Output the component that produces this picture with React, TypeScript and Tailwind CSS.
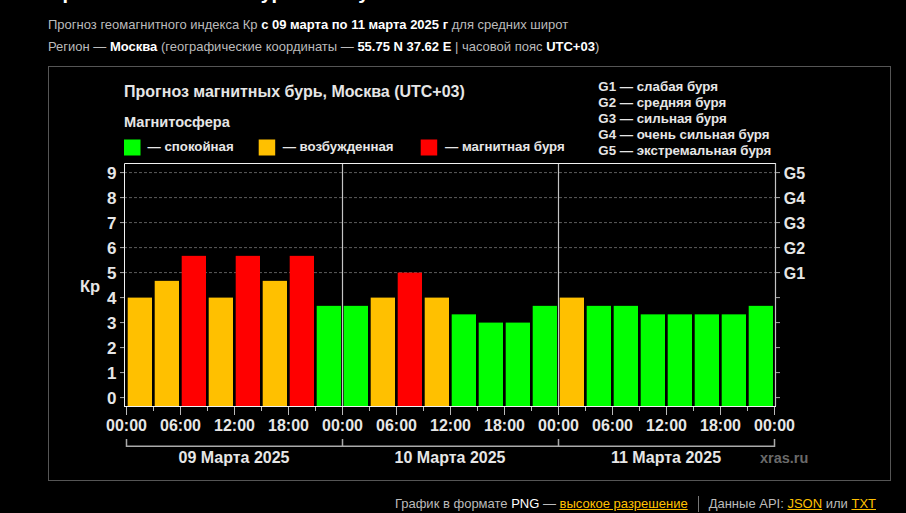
const AMBER = "#ffc000";
const RED = "#ff0000";
const GREEN = "#00ff00";

const kp = [
  4, 4.67, 5.67, 4, 5.67, 4.67, 5.67, 3.67,
  3.67, 4, 5, 4, 3.33, 3, 3, 3.67,
  4, 3.67, 3.67, 3.33, 3.33, 3.33, 3.33, 3.67,
];

const barColor = (v: number) => (v >= 5 ? RED : v >= 4 ? AMBER : GREEN);

const y0 = 330.6;
const unit = 25;
const yOf = (v: number) => y0 - v * unit;
const xOf = (i: number) => 77 + i * 27;

function Chart() {
  const labelProps = { fill: "#e6e6e6", fontWeight: 700, fontFamily: "'Liberation Sans', Arial, sans-serif" };
  return (
    <svg width="841" height="413" viewBox="0 0 841 413" className="block" {...labelProps}>
      <text x="75" y="29.5" fontSize="16">Прогноз магнитных бурь, Москва (UTC+03)</text>
      <text x="75" y="60" fontSize="14.6">Магнитосфера</text>

      <rect x="75" y="72.5" width="16.5" height="16" fill={GREEN} />
      <text x="98.5" y="84" fontSize="13.25">— спокойная</text>
      <rect x="209.7" y="72.5" width="16.5" height="16" fill={AMBER} />
      <text x="233.7" y="84" fontSize="13.25">— возбужденная</text>
      <rect x="371.7" y="72.5" width="16.5" height="16" fill={RED} />
      <text x="396" y="84" fontSize="13.25">— магнитная буря</text>

      <text x="549.3" y="24" fontSize="13.3">G1 — слабая буря</text>
      <text x="549.3" y="40" fontSize="13.3">G2 — средняя буря</text>
      <text x="549.3" y="56" fontSize="13.3">G3 — сильная буря</text>
      <text x="549.3" y="72" fontSize="13.3">G4 — очень сильная буря</text>
      <text x="549.3" y="88" fontSize="13.3">G5 — экстремальная буря</text>

      {/* grid */}
      {[5, 6, 7, 8, 9].map((v) => (
        <line key={v} x1="75" x2="726" y1={yOf(v)} y2={yOf(v)} stroke="#5c5c5c" strokeWidth="1" strokeDasharray="3 2" />
      ))}

      {/* bars */}
      {kp.map((v, i) => (
        <rect key={i} x={xOf(i) + 1.7} y={yOf(v)} width="24.3" height={339 - yOf(v)} fill={barColor(v)} />
      ))}

      {/* day separators and frame */}
      <line x1="293.5" x2="293.5" y1="96" y2="339" stroke="#c4c4c4" strokeWidth="1.2" />
      <line x1="509.5" x2="509.5" y1="96" y2="339" stroke="#c4c4c4" strokeWidth="1.2" />
      <line x1="726.5" x2="726.5" y1="96" y2="339" stroke="#c4c4c4" strokeWidth="1.2" />
      <path d="M75.5 339.5V96.5H726.5M75 339.5H727" fill="none" stroke="#f2f2f2" />

      {/* left ticks and Kp scale */}
      {[0, 1, 2, 3, 4, 5, 6, 7, 8, 9].map((v) => (
        <g key={v}>
          <line x1="71" x2="75" y1={yOf(v)} y2={yOf(v)} stroke="#aaa" />
          <line x1="727" x2="731" y1={yOf(v)} y2={yOf(v)} stroke="#aaa" />
          <text x="67.5" y={yOf(v) + 6.5} fontSize="17" textAnchor="end">{v}</text>
        </g>
      ))}
      <text x="31" y="224.7" fontSize="16.5">Кр</text>

      {/* G scale */}
      {[5, 6, 7, 8, 9].map((v) => (
        <text key={v} x="734.7" y={yOf(v) + 6.3} fontSize="16">G{v - 4}</text>
      ))}

      {/* time axis */}
      {Array.from({ length: 25 }, (_, i) => (
        <line key={i} x1={xOf(i) + 0.5} x2={xOf(i) + 0.5} y1="340" y2={i % 2 === 0 ? 348 : 344} stroke="#bbb" />
      ))}
      {Array.from({ length: 13 }, (_, i) => {
        const h = ["00:00", "06:00", "12:00", "18:00"][i % 4];
        return (
          <text key={i} x={xOf(i * 2) + 0.5} y="363.5" fontSize="16" textAnchor="middle">{h}</text>
        );
      })}

      {/* day brackets */}
      <path d="M77.5 372V379.2H725.5V372M293.5 372V379.2M509.5 372V379.2" fill="none" stroke="#aaa" strokeWidth="1.5" />
      <text x="185" y="396" fontSize="16" textAnchor="middle">09 Марта 2025</text>
      <text x="401" y="396" fontSize="16" textAnchor="middle">10 Марта 2025</text>
      <text x="617" y="396" fontSize="16" textAnchor="middle">11 Марта 2025</text>
      <text x="711" y="396" fontSize="14.5" fill="#6a6a6a">xras.ru</text>
    </svg>
  );
}

export default function App() {
  return (
    <div className="h-[513px] overflow-hidden bg-black px-12 font-['Liberation_Sans',Arial,sans-serif] text-[13px] text-[#bbb]">
      <h2 className="-mt-[20px] h-[34px] text-[20px] font-bold leading-[24px] text-white">
        Прогноз магнитных бурь на 3 суток
      </h2>
      <p className="leading-[22px]">
        Прогноз геомагнитного индекса Кр <b className="text-white">с 09 марта по 11 марта 2025 г</b> для средних широт
      </p>
      <p className="leading-[22px]">
        Регион — <b className="text-white">Москва</b> (географические координаты — <b className="text-white">55.75 N 37.62 E</b> | часовой пояс <b className="text-white">UTC+03</b>)
      </p>
      <div className="mt-[8px] h-[415px] w-[843px] border border-[#555]">
        <Chart />
      </div>
      <div className="mt-[14px] flex w-[828px] items-center justify-end leading-[18px]">
        <span>График в формате <span className="text-white">PNG</span> — <a className="text-[#ffc000] underline">высокое разрешение</a></span>
        <span className="mx-[10px] h-[16px] w-px bg-[#777]" />
        <span>Данные API: <a className="text-[#ffc000] underline">JSON</a> или <a className="text-[#ffc000] underline">TXT</a></span>
      </div>
    </div>
  );
}
